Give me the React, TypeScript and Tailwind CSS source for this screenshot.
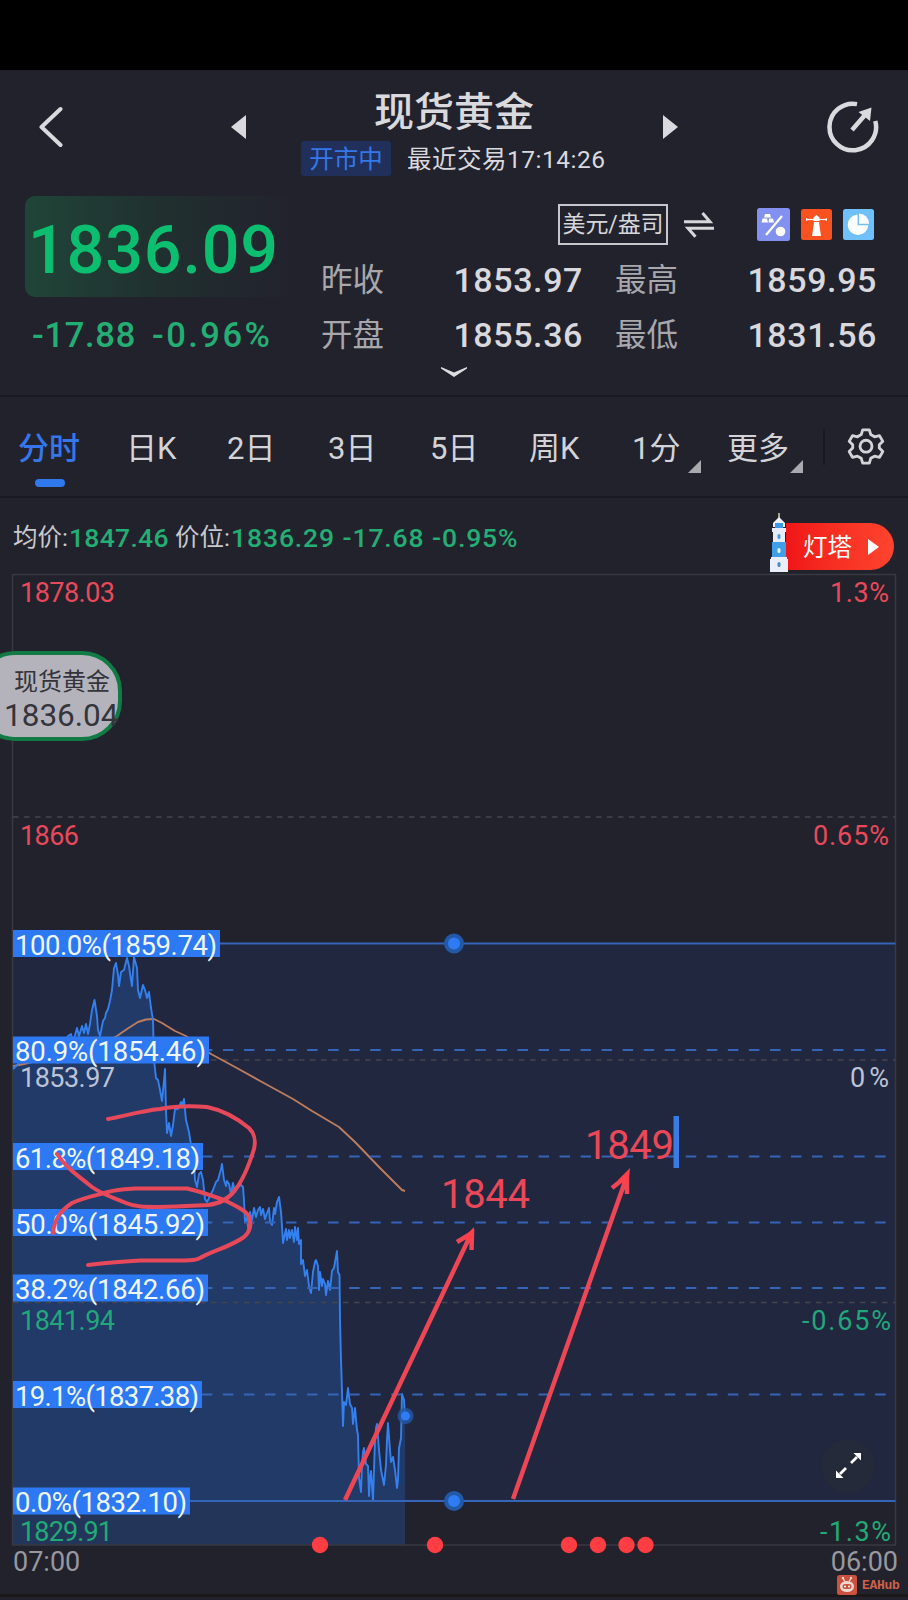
import { clsx } from "clsx";

const stats = [
  { label: "昨收", value: "1853.97" },
  { label: "最高", value: "1859.95" },
  { label: "开盘", value: "1855.36" },
  { label: "最低", value: "1831.56" },
];

const tabs = [
  { label: "分时", className: "w-[110px] pl-[18px]", active: true },
  { label: "日K", className: "w-[117px] pl-[16px]" },
  { label: "2日", className: "w-[101px]" },
  { label: "3日", className: "w-[102px]" },
  { label: "5日", className: "w-[99px]" },
  { label: "周K", className: "w-[103px]" },
  { label: "1分", className: "w-[95px]", more: true },
  { label: "更多", className: "w-[96px]", more: true },
];

const fibLevels = [
  { label: "100.0%(1859.74)", y: 943.5, width: 207, solid: true },
  { label: "80.9%(1854.46)", y: 1050, width: 196 },
  { label: "61.8%(1849.18)", y: 1156.5, width: 190 },
  { label: "50.0%(1845.92)", y: 1222.5, width: 195 },
  { label: "38.2%(1842.66)", y: 1288, width: 195 },
  { label: "19.1%(1837.38)", y: 1394.5, width: 189 },
  { label: "0.0%(1832.10)", y: 1501, width: 177, solid: true },
];

const axisLabels = [
  { price: "1878.03", pct: "1.3%", y: 601.5, right: 889, width: 95, pctWidth: 59, color: "#e9495a" },
  { price: "1866", pct: "0.65%", y: 844.5, right: 889, width: 59, pctWidth: 76, color: "#e9495a" },
  { price: "1853.97", pct: "0%", y: 1086.5, right: 889, width: 95, pctWidth: 39, color: "#bcc3d6" },
  { price: "1841.94", pct: "-0.65%", y: 1329.5, right: 891, width: 95, pctWidth: 89, color: "#22a67c" },
  { price: "1829.91", pct: "-1.3%", y: 1540.5, right: 891, width: 93, pctWidth: 71, color: "#20ab76" },
];

const pricePoints =
  "13,1069 20,1062 30,1060 40,1055 52,1050 58,1063 63,1045 68,1036 71,1034 73,1043 77,1028 79,1036 82,1026 84,1033 86,1024 88,1034 90,1024 92,1010 94.5,1000 97,1016 98,1030 100,1036 103,1021 105,1018 106,1013 108,1009 110,1001 112,990 114,968 116,963 118,975 119,986 121,972 124,970 127,958 129,966 131,980 132,986 134,957 137,968 138,990 140,998 143,985 145,990 147,998 149,992 151,1008 153,1020 154,1060 156,1078 158,1080 160,1090 162,1101 164,1080 165,1069 166,1110 167,1133 169,1123 171,1136 173,1125 175,1109 178,1109 181,1102 182,1106 184,1099 186,1120 189,1132 191,1145 194,1162 195,1180 197,1187 199,1174 201,1172 203,1180 205,1199 207,1202 210,1196 213,1190 216,1182 218,1180 221,1169 222,1164 224,1180 226,1186 227,1181 229,1184 231,1194 233,1183 235,1192 238,1187 241,1185 243,1187 244,1200 245,1222 247,1217 248,1228 250,1212 252,1220 254,1208 256,1217 258,1210 260,1207 261,1215 263,1209 265,1219 267,1213 269,1208 270,1222 272,1225 274,1208 275,1214 277,1202 279,1197 281,1212 282,1226 283,1243 286,1229 287,1240 289,1230 290,1238 292,1230 294,1242 295,1227 297,1240 298,1228 299,1244 301,1240 301,1264 303,1260 305,1276 307,1270 309,1286 311,1293 313,1272 315,1262 316,1260 318,1266 319,1290 320,1272 322,1286 323,1279 325,1284 326,1295 328,1281 330,1290 332,1271 334,1268 337,1251 338,1272 339.5,1275 340,1320 341,1360 342,1392 343,1426 344,1402 346,1405 348,1388 350,1404 352,1408 353,1424 355,1408 357,1430 358,1435 359,1478 361,1492 362,1464 363,1452 364,1448 366,1464 368,1466 369,1496 370,1478 371,1471 373,1500 374,1470 375,1440 376,1428 377,1424 379,1450 381,1470 384,1485 386,1465 387,1440 388,1423 390,1450 391,1462 393,1457 395,1470 397,1488 398,1480 399,1448 401,1438 402,1394 404,1400 405,1416";

const newsDots = [320, 435, 569, 598, 626.5, 645.5];

function Header() {
  return (
    <header className="flex h-[115px] justify-between pl-[39px] pr-[29px] text-[#d9d9de]">
      <svg className="mt-[36px] h-[42px] w-[25px]" viewBox="0 0 25 42" fill="none" stroke="currentColor" strokeWidth="4" strokeLinecap="round" strokeLinejoin="round">
        <path d="M21.500 3 2.500 21l19 18" />
      </svg>
      <div className="ml-[17px] flex gap-[55px]">
        <svg className="mt-[45px] h-6 w-[15px]" viewBox="0 0 15 24" fill="currentColor">
          <path d="M15 0v24L0 12z" />
        </svg>
        <div className="flex w-[307px] flex-col items-center">
          <h1 className="mt-[18px] h-[53px] text-[40px] leading-[50px] font-medium">
            现货黄金
          </h1>
          <div className="flex h-[35px] items-center gap-[16px] text-[24.500px]">
            <span className="flex h-[35px] w-[90px] items-center justify-center rounded-[3px] bg-[#20305b] pt-[3px] text-[#3478e8]">
              开市中
            </span>
            <span className="w-[200px] pt-[4px] tracking-[0.5px] whitespace-nowrap">最近交易17:14:26</span>
          </div>
        </div>
        <svg className="mt-[45px] h-6 w-[15px]" viewBox="0 0 15 24" fill="currentColor">
          <path d="M0 0v24l15-12z" />
        </svg>
      </div>
      <svg className="mt-[31px] h-[52px] w-[52px]" viewBox="0 0 52 52" fill="none">
        <path d="M30 3.100A23.300 23.300 0 1 0 48.300 20" stroke="currentColor" strokeWidth="4.500" />
        <path d="M25 29 38 14" stroke="currentColor" strokeWidth="4.500" />
        <path d="m31.500 11 13-4.500L43 20z" fill="currentColor" />
      </svg>
    </header>
  );
}

function QuickIcons() {
  return (
    <div className="flex items-center gap-[11px]">
      <svg className="size-[33px]" viewBox="0 0 33 33">
        <rect width="33" height="33" rx="2.500" fill="#8290f0" />
        <path d="M9 27 25 8" stroke="#fff" strokeWidth="2.200" />
        <circle cx="23.500" cy="23.500" r="4.800" fill="#fff" />
        <path d="M8 6h5l1 3.500H7zM5.500 10.500h4.500l1 4H4.500zM12 10.500h4l1 4h-5.500z" fill="#fff" />
      </svg>
      <svg className="size-[31px]" viewBox="0 0 31 31">
        <rect width="31" height="31" rx="2.500" fill="#f9511f" />
        <path d="M13 13h5l2 14h-9zM12.500 8.500l3-2.500 3 2.500V12h-6z" fill="#fff" />
        <path d="M5 10.500h21" stroke="#fff" strokeWidth="1.200" />
        <path d="m5 9 3 1.500L5 12zM26 9l-3 1.500 3 1.500z" fill="#fff" />
      </svg>
      <svg className="size-[31px]" viewBox="0 0 31 31">
        <rect width="31" height="31" rx="2.500" fill="#6fc0fb" />
        <path d="M14.500 5.500a10.300 10.300 0 1 0 10.800 10.800H14.500z" fill="#fff" />
        <path d="M16 4.500a10 10 0 0 1 10 10.200H16z" fill="#fff" />
      </svg>
    </div>
  );
}

function Quote() {
  return (
    <section className="h-[210px] pt-[11px] pl-[25px]">
      <div className="flex">
        <div className="w-[296px]">
          <div className="flex h-[101px] w-[270px] items-center rounded-[10px] bg-linear-to-r from-[#1f4538] via-[#20302f] to-[#22222d] pt-[8px] pl-[3px]">
            <span className="text-[66.500px] leading-none font-medium tracking-[0.8px] text-[#0cbf70]">
              1836.09
            </span>
          </div>
          <div className="flex h-[75px] items-center gap-[16px] pt-[2px] pl-[7px] text-[34.500px] font-medium text-[#23ae74]">
            <span className="tracking-[0.7px]">-17.88</span>
            <span className="tracking-[2.500px]">-0.96%</span>
          </div>
        </div>
        <div>
          <div className="flex h-[57px] items-center pl-[237px] text-[#d6d6db]">
            <span className="flex h-[41px] w-[110px] items-center justify-center border-2 border-[#c6c6cc] pt-[2px] text-[23px] tracking-[-0.1px]">
              美元/盎司
            </span>
            <svg className="mr-[43px] ml-4 h-[26px] w-[30px]" viewBox="0 0 30 26" fill="none" stroke="currentColor" strokeWidth="3">
              <path d="M0 9.800h26L18.500 1M30 16.300H4l7.500 8.500" />
            </svg>
            <QuickIcons />
          </div>
          <dl className="grid grid-cols-[262px_294px] text-[34px]">
            {stats.map((stat, i) => (
              <div key={stat.label} className={clsx("flex h-[55px] items-center justify-between", i % 2 === 1 && "pl-[32px]")}>
                <dt className="text-[31.500px] text-[#a7a7ac]">{stat.label}</dt>
                <dd className="font-medium tracking-[0.6px] text-[#d8d8dd]">{stat.value}</dd>
              </div>
            ))}
          </dl>
        </div>
      </div>
      <svg className="-mt-[5px] ml-[416px] h-[10px] w-[26px]" viewBox="0 0 26 10" fill="#dedee2">
        <path d="M0 0 13 5.500 26 0v1.500L13 10 0 1.500z" />
      </svg>
    </section>
  );
}

function Tabs() {
  return (
    <nav className="flex h-[103px] border-y-2 border-[#191922] text-[31px] text-[#d3d3d8]">
      {tabs.map((tab) => (
        <div key={tab.label} className={clsx("flex shrink-0", tab.className)}>
          <div className="relative flex h-[105px] items-center">
            <span className={clsx("whitespace-nowrap", tab.active && "font-medium text-[#3577ea]")}>{tab.label}</span>
            {tab.active && (
              <span className="absolute top-[82px] left-[17px] h-2 w-[30px] rounded-full bg-[#2f78ee]" />
            )}
          </div>
          {tab.more && (
            <svg className={clsx("mt-[63px] size-[13px]", tab.label === "1分" ? "ml-[8px]" : "ml-[1px]")} viewBox="0 0 13 13" fill="#a9a9b0">
              <path d="M13 0v13H0z" />
            </svg>
          )}
        </div>
      ))}
      <div className="mt-[32px] h-9 w-[2px] bg-[#191921]" />
      <svg className="mt-[30px] ml-[22px] size-[38px]" viewBox="-1 0 40 38" fill="none" stroke="currentColor" strokeWidth="3" strokeLinejoin="round">
        <path d="M15.500 2h7l1.500 5 4 2.300 5.200-1.200 3.500 6-3.700 3.700v3.400l3.700 3.700-3.500 6-5.200-1.200-4 2.300-1.500 5h-7l-1.500-5-4-2.300-5.200 1.200-3.500-6 3.700-3.700v-3.400L1.300 14.100l3.500-6L10 9.300 14 7z" />
        <circle cx="19" cy="19.200" r="6.300" />
      </svg>
    </nav>
  );
}

function InfoRow() {
  return (
    <div className="flex h-[76px] items-start justify-between pr-[14px] pl-[13px]">
      <p className="mt-[22px] flex h-9 items-center text-[26.500px] font-medium whitespace-pre text-[#23ae74]">
        <span className="w-[56px] text-[24.500px] font-normal text-[#c9c9ce]">均价:</span>
        <span className="w-[106px] tracking-[0.3px]">1847.46</span>
        <span className="w-[56px] text-[24.500px] font-normal text-[#c9c9ce]">价位:</span>
        <span className="tracking-[0.9px]">1836.29 -17.68 -0.95%</span>
      </p>
      <div className="mt-[15px] flex">
        <svg className="z-10 h-[59px] w-[18px]" viewBox="0 0 18 59">
          <path d="M9 0v8" stroke="#d9cfae" strokeWidth="1.500" />
          <path d="M9 4 15 10v4H3v-4z" fill="#edf1fb" />
          <path d="M5 10h8v6H5z" fill="#3b9be8" />
          <path d="M2 15h14v4H2zM3 19h12v10H3z" fill="#e6ecfa" />
          <path d="M2 29h14v15H2z" fill="#3f9fea" />
          <path d="M1 44h16v2h1v13H0V46h1z" fill="#eaeefa" />
          <rect x="7.500" y="21" width="3" height="5" rx="1.500" fill="#4a9be0" />
          <rect x="7.500" y="35" width="3" height="5" rx="1.500" fill="#e8f2ff" />
          <rect x="7.500" y="49" width="3" height="5" rx="1.500" fill="#4a86c8" />
        </svg>
        <div className="mt-[10px] -ml-[2px] flex h-[47px] w-[108px] items-center justify-between rounded-r-full bg-linear-to-r from-[#f01417] to-[#ff442e] pr-[15px] pl-[17px] text-[24.500px] text-white">
          <span className="pt-[3px]">灯塔</span>
          <svg className="h-4 w-[11px]" viewBox="0 0 11 16" fill="currentColor">
            <path d="M0 0v16l11-8z" />
          </svg>
        </div>
      </div>
    </div>
  );
}

function Chart() {
  return (
    <svg className="block h-[972px] w-[908px] overflow-visible" viewBox="0 574 908 972" fontSize="27.500">
      <rect x="13" y="943" width="882" height="558" fill="#20273f" />
      <polygon points={`${pricePoints} 405,1545 13,1545`} fill="#2979ea" fillOpacity="0.24" />

      {/* grid */}
      <rect x="12.500" y="574.500" width="883" height="970.500" fill="none" stroke="#393941" strokeWidth="1.500" />
      {[817, 1060, 1302.5].map((y) => (
        <path key={y} d={`M13 ${y}H895`} stroke="#45454e" strokeWidth="1.500" strokeDasharray="5.500 5.500" />
      ))}

      <polyline
        points="13,1066 24,1064 60,1055 95,1046 117,1036 127,1029 138,1022 146,1019.500 154,1019 162,1023 175,1031 186,1036 211,1054 235,1067 262,1082 293,1099 312,1111 339,1127 355,1142 380,1168 396,1184 402,1190 405,1191"
        fill="none"
        stroke="#bd7d5c"
        strokeWidth="1.900"
        strokeLinejoin="round"
      />
      <polyline points={pricePoints} fill="none" stroke="#3380ee" strokeWidth="1.900" strokeLinejoin="round" />

      {fibLevels.map((level) => (
        <g key={level.label}>
          <path
            d={level.solid ? `M13 ${level.y}H895.500` : `M13 ${level.y}H886`}
            stroke="#3565b8"
            strokeWidth="2"
            strokeDasharray={level.solid ? undefined : "10.500 10.540"}
            strokeDashoffset={level.solid ? undefined : 0.5}
          />
          <rect x="13" y={level.y - 13.5} width={level.width} height="27" fill="#2d79f3" />
          <text x="15" y={level.y + 11} textLength={level.width - 5} fill="#f0f6ff">
            {level.label}
          </text>
        </g>
      ))}

      {axisLabels.map((label) => (
        <g key={label.price} fill={label.color} fontSize="27">
          <text x="20" y={label.y} textLength={label.width}>
            {label.price}
          </text>
          <text x={label.right - label.pctWidth} y={label.y} textLength={label.pctWidth}>
            {label.pct}
          </text>
        </g>
      ))}

      {[943.5, 1501].map((y) => (
        <g key={y}>
          <circle cx="454" cy={y} r="10" fill="#2459a8" />
          <circle cx="454" cy={y} r="6" fill="#2d7cf3" />
        </g>
      ))}
      <circle cx="405.500" cy="1416" r="8" fill="#2459a8" fillOpacity="0.8" />
      <circle cx="405.500" cy="1416" r="4.500" fill="#2d7cf3" />

      {/* hand drawn marks */}
      <g fill="none" stroke="#e8495a" strokeWidth="4" strokeLinecap="round" strokeLinejoin="round">
        <path d="M108 1119C125 1116 140 1111 160 1109C175 1106 195 1106 207 1107C222 1110 238 1119 249 1128C255 1134 256 1140 254 1149C250 1162 243 1180 235 1190C228 1200 217 1204 208 1205C190 1206 178 1207 160 1207C145 1207 135 1207 126 1203C112 1197 103 1195 92 1187C80 1177 67 1169 57 1154" />
        <path d="M53 1233C54 1222 58 1212 72 1203C85 1197 98 1195 108 1192C118 1189 126 1189 135 1188.500H187C202 1192 213 1196 224 1200C236 1206 247 1211 249 1217C252 1224 250 1232 244 1237C230 1247 212 1251 200 1258C192 1262 180 1260 140 1260.500C120 1262 105 1263 88 1265" />
      </g>
      <g fill="none" stroke="#ee4654" strokeWidth="4.500">
        <path d="M345 1500 471 1234M457 1242 472 1233 471.500 1250" />
        <path d="M513 1499 627 1176M612 1188 627 1176 627 1194" />
      </g>
      <path d="m474 1227-11 11 10 4zM630 1168l-12 12 10 5z" fill="#ff3f49" />
      <g fill="#ea4858" fontSize="40">
        <text x="441" y="1208" textLength="89">1844</text>
        <text x="585" y="1159" textLength="89">1849</text>
      </g>
      <rect x="673.500" y="1116" width="5.500" height="52" fill="#3a7be8" />

      {newsDots.map((x) => (
        <circle key={x} cx={x} cy="1545" r="8.200" fill="#ff3d42" />
      ))}

      <circle cx="848" cy="1466" r="27" fill="#242a39" />
      <g fill="#fff" stroke="#fff" strokeWidth="2.800">
        <path d="m851 1463 6-6M846 1468l-6 6" />
        <path d="M861 1453v7.500l-7.500-7.500zM836 1478v-7.500l7.500 7.500z" stroke="none" />
      </g>
    </svg>
  );
}

function FloatingQuote() {
  return (
    <div className="absolute top-[651px] -left-[25px] flex h-[90px] w-[147px] flex-col rounded-r-[40px] rounded-l-[40px] border-[4.500px] border-[#127a44] bg-[#b4b3bb] text-[#34343b]">
      <span className="mt-[10px] ml-[35px] text-[24px] leading-[34px] whitespace-nowrap">现货黄金</span>
      <span className="ml-[25px] text-[31.500px] leading-[33px] whitespace-nowrap">1836.04</span>
    </div>
  );
}

function Watermark() {
  return (
    <div className="absolute top-[1575px] left-[837px] flex h-5 items-center gap-[5px] text-[#d0604a]">
      <svg className="size-5" viewBox="0 0 20 20">
        <rect width="20" height="20" rx="2.500" fill="#cc513e" />
        <path d="m6 3 2 4M14 3l-2 4" stroke="#f3d9d2" strokeWidth="1.300" />
        <circle cx="6" cy="3" r="1.200" fill="#f3d9d2" />
        <circle cx="14" cy="3" r="1.200" fill="#f3d9d2" />
        <ellipse cx="10" cy="11.500" rx="7" ry="5.500" fill="#f3d9d2" />
        <rect x="5.500" y="9" width="9" height="5" rx="2.500" fill="#cc513e" />
        <circle cx="8" cy="11.500" r="1" fill="#fff" />
        <circle cx="12" cy="11.500" r="1" fill="#fff" />
      </svg>
      <span className="font-['Liberation_Mono',monospace] text-[13px] leading-none font-bold tracking-[-0.3px]">EAHub</span>
    </div>
  );
}

export default function App() {
  return (
    <div className="relative h-[1600px] w-[908px] overflow-hidden bg-[#22222d] font-['Roboto','Noto_Sans_CJK_SC',sans-serif]">
      <div className="h-[70px] bg-black" />
      <Header />
      <Quote />
      <Tabs />
      <InfoRow />
      <Chart />
      <div className="flex h-[51px] justify-between border-b-[3px] border-[#1c181a] pr-[10px] pl-[13px] text-[27px] leading-[33px] text-[#98989e]">
        <span>07:00</span>
        <span>06:00</span>
      </div>
      <FloatingQuote />
      <Watermark />
    </div>
  );
}
